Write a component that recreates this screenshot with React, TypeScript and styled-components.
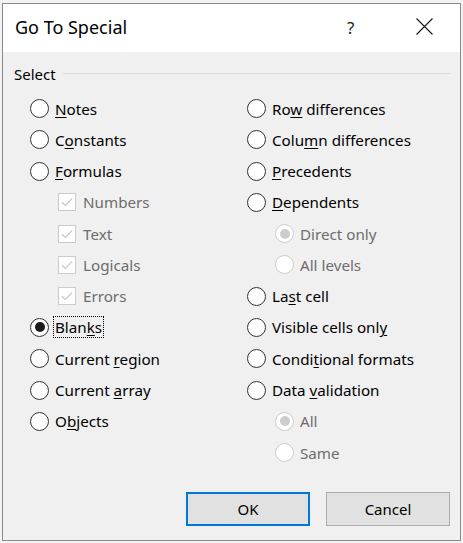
import React from "react";
import styled, { createGlobalStyle } from "styled-components";

const GlobalStyle = createGlobalStyle`
  html, body {
    margin: 0;
    padding: 0;
    background: #f3f3f3;
  }
  body {
    font-family: "Noto Sans", "Open Sans", Arial, sans-serif;
  }
`;

type Item = {
  label: string;
  kind: "radio" | "check";
  sub?: boolean;
  disabled?: boolean;
  checked?: boolean;
  focused?: boolean;
};

// "&" marks the access key, as in a Windows resource string
const leftItems: Item[] = [
  { label: "&Notes", kind: "radio" },
  { label: "C&onstants", kind: "radio" },
  { label: "&Formulas", kind: "radio" },
  { label: "Numbers", kind: "check", sub: true, disabled: true, checked: true },
  { label: "Text", kind: "check", sub: true, disabled: true, checked: true },
  { label: "Logicals", kind: "check", sub: true, disabled: true, checked: true },
  { label: "Errors", kind: "check", sub: true, disabled: true, checked: true },
  { label: "Blan&ks", kind: "radio", checked: true, focused: true },
  { label: "Current &region", kind: "radio" },
  { label: "Current &array", kind: "radio" },
  { label: "O&bjects", kind: "radio" },
];

const rightItems: Item[] = [
  { label: "Ro&w differences", kind: "radio" },
  { label: "Colu&mn differences", kind: "radio" },
  { label: "&Precedents", kind: "radio" },
  { label: "&Dependents", kind: "radio" },
  { label: "Direct only", kind: "radio", sub: true, disabled: true, checked: true },
  { label: "All levels", kind: "radio", sub: true, disabled: true },
  { label: "La&st cell", kind: "radio" },
  { label: "Visible cells onl&y", kind: "radio" },
  { label: "Condi&tional formats", kind: "radio" },
  { label: "Data &validation", kind: "radio" },
  { label: "All", kind: "radio", sub: true, disabled: true, checked: true },
  { label: "Same", kind: "radio", sub: true, disabled: true },
];

const Mnemonic = ({ text }: { text: string }) => {
  const i = text.indexOf("&");
  if (i < 0) return <>{text}</>;
  return (
    <>
      {text.slice(0, i)}
      <Key>{text[i + 1]}</Key>
      {text.slice(i + 2)}
    </>
  );
};

const Option = ({ item }: { item: Item }) => (
  <Row $sub={item.sub}>
    {item.kind === "radio" ? (
      <RadioMark $disabled={item.disabled} $checked={item.checked} />
    ) : (
      <CheckMark $disabled={item.disabled}>
        {item.checked && (
          <svg width="12" height="10" viewBox="0 0 12 10">
            <path d="M1 5.2 L4.3 8.4 L11 1.6" fill="none" stroke="#c8c8c8" strokeWidth="1.3" />
          </svg>
        )}
      </CheckMark>
    )}
    <Label $disabled={item.disabled} $focused={item.focused}>
      <Mnemonic text={item.label} />
    </Label>
  </Row>
);

const App = () => {
  return (
    <>
      <GlobalStyle />
      <Window>
        <TitleBar>
          <Title>Go To Special</Title>
          <Help>?</Help>
          <Close>
            <svg width="17" height="17" viewBox="0 0 17 17">
              <path d="M0.5 0.5 L16.5 16.5 M16.5 0.5 L0.5 16.5" stroke="#1a1a1a" strokeWidth="1.1" />
            </svg>
          </Close>
        </TitleBar>
        <Body>
          <Legend>
            <span>Select</span>
            <Rule />
          </Legend>
          <Columns>
            <Column>
              {leftItems.map((it) => (
                <Option key={it.label} item={it} />
              ))}
            </Column>
            <Column>
              {rightItems.map((it) => (
                <Option key={it.label} item={it} />
              ))}
            </Column>
          </Columns>
          <Buttons>
            <Button $default>OK</Button>
            <Button>Cancel</Button>
          </Buttons>
        </Body>
      </Window>
    </>
  );
};

const Window = styled.div`
  box-sizing: border-box;
  margin: 3px 0 0 2px;
  width: 459px;
  height: 538px;
  border: 1px solid #8a8a8a;
  background: #f0f0f0;
  display: flex;
  flex-direction: column;
`;

const TitleBar = styled.div`
  height: 48px;
  background: #ffffff;
  display: flex;
  align-items: center;
  padding-left: 12px;
`;

const Title = styled.div`
  flex: 1;
  font-size: 18px;
  color: #000;
  margin-top: -2px;
`;

const Help = styled.div`
  width: 20px;
  font-size: 17px;
  color: #1a1a1a;
  margin-right: 49px;
  margin-top: -2px;
`;

const Close = styled.div`
  display: flex;
  margin-right: 27px;
  margin-top: -3px;
`;

const Body = styled.div`
  flex: 1;
  display: flex;
  flex-direction: column;
  padding: 12px 9px 0 11px;
`;

const Legend = styled.div`
  display: flex;
  align-items: center;
  gap: 7px;
  height: 20px;
  font-size: 15px;
  color: #000;
`;

const Rule = styled.div`
  flex: 1;
  height: 1px;
  background: #dcdcdc;
  margin-top: -1px;
`;

const Columns = styled.div`
  display: grid;
  grid-template-columns: 217px 1fr;
  margin-top: 9px;
  padding-left: 16px;
`;

const Column = styled.div`
  display: flex;
  flex-direction: column;
`;

const Row = styled.div<{ $sub?: boolean }>`
  display: flex;
  align-items: center;
  height: 31.28px;
  padding-left: ${(p) => (p.$sub ? 28 : 0)}px;
`;

const RadioMark = styled.span<{ $disabled?: boolean; $checked?: boolean }>`
  box-sizing: border-box;
  width: 19px;
  height: 19px;
  flex: none;
  border-radius: 50%;
  border: 1.5px solid ${(p) => (p.$disabled ? "#cccccc" : "#333333")};
  background: #ffffff;
  display: flex;
  align-items: center;
  justify-content: center;
  margin-right: 7px;
  &::after {
    content: "";
    display: ${(p) => (p.$checked ? "block" : "none")};
    width: 10px;
    height: 10px;
    border-radius: 50%;
    background: ${(p) => (p.$disabled ? "#cccccc" : "#1a1a1a")};
  }
`;

const CheckMark = styled.span<{ $disabled?: boolean }>`
  box-sizing: border-box;
  width: 18px;
  height: 18px;
  flex: none;
  border: 1px solid ${(p) => (p.$disabled ? "#cccccc" : "#333333")};
  background: #ffffff;
  display: flex;
  align-items: center;
  justify-content: center;
  margin-right: 8px;
`;

const Label = styled.span<{ $disabled?: boolean; $focused?: boolean }>`
  font-size: 15.2px;
  color: ${(p) => (p.$disabled ? "#6d6d6d" : "#000000")};
  white-space: nowrap;
  padding: 0 1px;
  margin-left: -2px;
  outline: ${(p) => (p.$focused ? "1px dotted #000" : "none")};
  outline-offset: 0;
`;

const Key = styled.span`
  text-decoration: underline;
  text-underline-offset: 2px;
`;

const Buttons = styled.div`
  display: flex;
  justify-content: flex-end;
  gap: 16px;
  margin-top: 24px;
  padding-right: 1px;
`;

const Button = styled.div<{ $default?: boolean }>`
  box-sizing: border-box;
  width: 124px;
  height: 34px;
  display: flex;
  align-items: center;
  justify-content: center;
  background: #e1e1e1;
  border: ${(p) => (p.$default ? "2px solid #0078d7" : "1px solid #adadad")};
  font-size: 15px;
  color: #000;
`;

export default App;
